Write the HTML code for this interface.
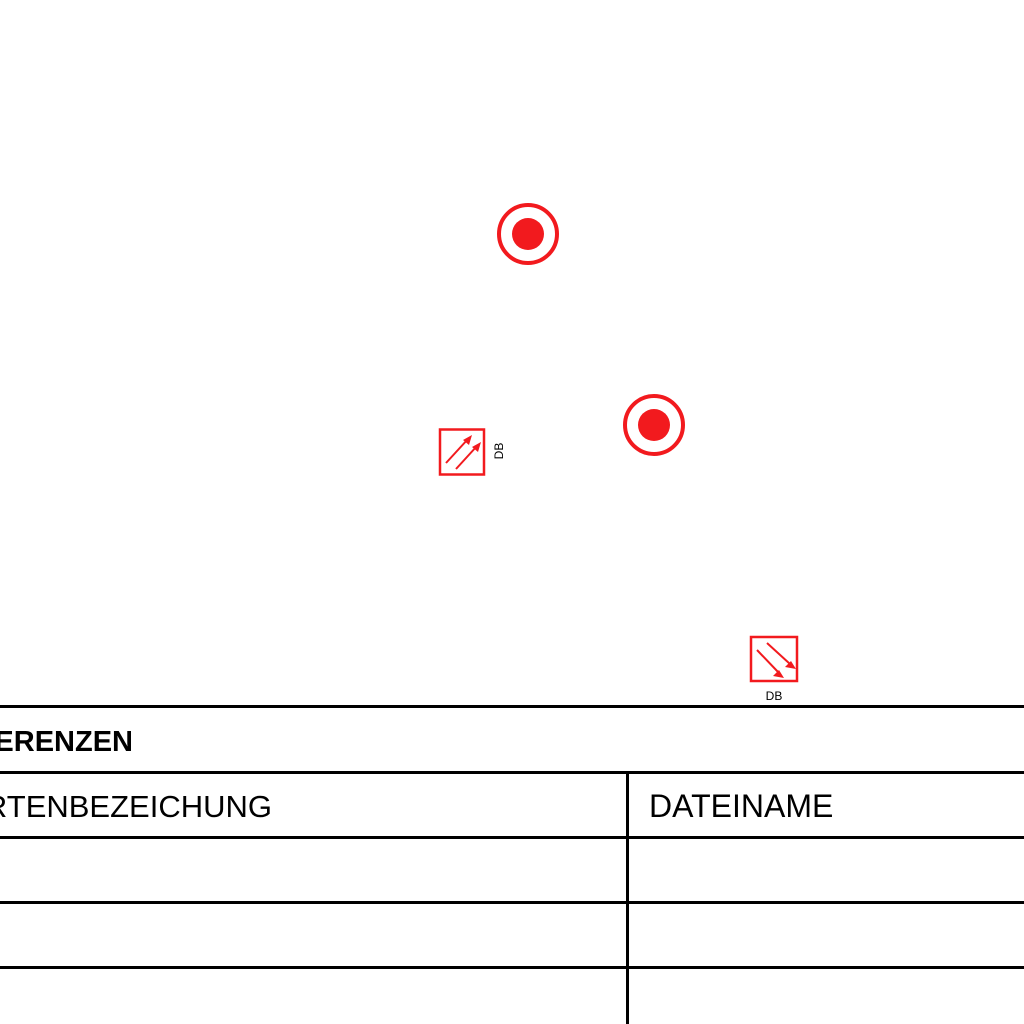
<!DOCTYPE html>
<html><head><meta charset="utf-8"><style>
html,body{margin:0;padding:0;background:#fff;width:1024px;height:1024px;overflow:hidden;font-family:"Liberation Sans",sans-serif}
#w{position:relative;width:1024px;height:1024px;overflow:hidden}
.h{position:absolute;left:0;width:1024px;background:#000}
.t{position:absolute;white-space:nowrap;color:#000;line-height:1}
</style></head><body><div id="w">
<svg width="1024" height="1024" style="position:absolute;left:0;top:0">
<g fill="none" stroke="#f21a1e">
<circle cx="528" cy="234" r="29" stroke-width="4"/>
<circle cx="654" cy="425" r="29" stroke-width="4"/>
<rect x="440" y="429.5" width="44" height="45" stroke-width="2.5"/>
<rect x="751" y="637" width="46" height="44" stroke-width="2.5"/>
<g stroke-width="2">
<line x1="446" y1="463" x2="468" y2="439"/>
<line x1="456" y1="469" x2="477" y2="446"/>
<line x1="757" y1="650" x2="779" y2="673"/>
<line x1="767" y1="643" x2="790" y2="664"/>
</g>
</g>
<g fill="#f21a1e">
<circle cx="528" cy="234" r="16"/>
<circle cx="654" cy="425" r="16"/>
<polygon points="472,435 469,445 463,440"/>
<polygon points="481,442 478,452 472,447"/>
<polygon points="784,678 773,676 779,670"/>
<polygon points="796,669 785,667 791,661"/>
</g>
<text x="0" y="0" font-family="Liberation Sans" font-size="12" fill="#000" transform="translate(503,451) rotate(-90)" text-anchor="middle">DB</text>
<text x="774" y="700" font-family="Liberation Sans" font-size="12" fill="#000" text-anchor="middle">DB</text>
</svg>
<div class="h" style="top:705px;height:3px"></div>
<div class="h" style="top:771px;height:3px"></div>
<div class="h" style="top:836px;height:3px"></div>
<div class="h" style="top:901px;height:3px"></div>
<div class="h" style="top:966px;height:3px"></div>
<div style="position:absolute;left:626px;top:772px;width:3px;height:252px;background:#000"></div>
<div class="t" style="right:891px;top:728px;font-size:29px;font-weight:bold">REFERENZEN</div>
<div class="t" style="right:752px;top:791px;font-size:31px">KARTENBEZEICHUNG</div>
<div class="t" style="left:649px;top:790px;font-size:32px">DATEINAME</div>
</div></body></html>
